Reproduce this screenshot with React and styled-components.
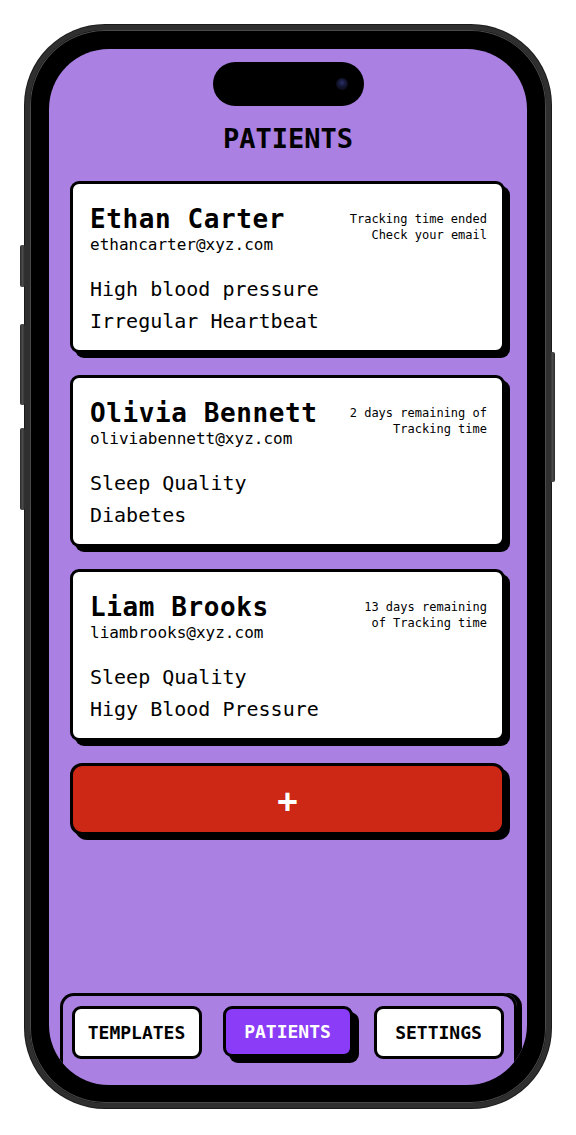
import React from 'react'
import styled, { createGlobalStyle } from 'styled-components'

const GlobalStyle = createGlobalStyle`
  html, body {
    margin: 0;
    padding: 0;
    background: #ffffff;
  }
  * { box-sizing: border-box; }
`

const patients = [
  {
    name: 'Ethan Carter',
    email: 'ethancarter@xyz.com',
    status: ['Tracking time ended', 'Check your email'],
    conditions: ['High blood pressure', 'Irregular Heartbeat'],
  },
  {
    name: 'Olivia Bennett',
    email: 'oliviabennett@xyz.com',
    status: ['2 days remaining of', 'Tracking time'],
    conditions: ['Sleep Quality', 'Diabetes'],
  },
  {
    name: 'Liam Brooks',
    email: 'liambrooks@xyz.com',
    status: ['13 days remaining', 'of Tracking time'],
    conditions: ['Sleep Quality', 'Higy Blood Pressure'],
  },
]

const tabs = ['TEMPLATES', 'PATIENTS', 'SETTINGS']

function App() {
  return (
    <Page>
      <GlobalStyle />
      <Phone>
        <SideButton side="left" top={215} height={42} />
        <SideButton side="left" top={294} height={81} />
        <SideButton side="left" top={398} height={82} />
        <SideButton side="right" top={322} height={130} />
        <Screen>
          <Island>
            <Camera />
          </Island>
          <Title>PATIENTS</Title>
          <List>
            {patients.map((p) => (
              <Card key={p.email}>
                <CardTop>
                  <div>
                    <Name>{p.name}</Name>
                    <Email>{p.email}</Email>
                  </div>
                  <Status>
                    {p.status.map((s) => (
                      <div key={s}>{s}</div>
                    ))}
                  </Status>
                </CardTop>
                <Conditions>
                  {p.conditions.map((c) => (
                    <div key={c}>{c}</div>
                  ))}
                </Conditions>
              </Card>
            ))}
            <AddButton>+</AddButton>
          </List>
          <NavBar>
            {tabs.map((t) => (
              <Tab key={t} active={t === 'PATIENTS'}>
                {t}
              </Tab>
            ))}
          </NavBar>
        </Screen>
      </Phone>
    </Page>
  )
}

const Page = styled.div`
  width: 576px;
  height: 1135px;
  padding: 25px 0 0 25px;
  font-family: "DejaVu Sans Mono", "Liberation Mono", monospace;
`

const Phone = styled.div`
  position: relative;
  width: 526px;
  height: 1083px;
  padding: 19px 19px 18px 19px;
  border: 5px solid #2f2f2f;
  border-radius: 80px;
  background: #000;
  box-shadow: inset 0 0 0 1px #4a4a4a, 0 0 0 1px #1a1a1a;
`

const SideButton = styled.div`
  position: absolute;
  top: ${(p) => p.top}px;
  ${(p) => (p.side === 'left' ? 'left: -10px;' : 'right: -9px;')}
  width: 5px;
  height: ${(p) => p.height}px;
  background: linear-gradient(90deg, #2a2a2a, #4a4a4a, #2a2a2a);
  border-radius: 2px;
`

const Screen = styled.div`
  position: relative;
  width: 478px;
  height: 1036px;
  border-radius: 60px;
  overflow: hidden;
  background: #aa80e2;
  display: flex;
  flex-direction: column;
  align-items: center;
`

const Island = styled.div`
  margin-top: 13px;
  width: 151px;
  height: 44px;
  border-radius: 22px;
  background: #000;
  display: flex;
  align-items: center;
  justify-content: flex-end;
  padding-right: 16px;
`

const Camera = styled.div`
  width: 12px;
  height: 12px;
  border-radius: 50%;
  background: radial-gradient(circle at 50% 40%, #2a2f6a 0, #12142e 45%, #050508 100%);
`

const Title = styled.h1`
  margin: 17px 0 0;
  font-size: 27px;
  line-height: 32px;
  font-weight: 700;
  color: #000;
`

const List = styled.div`
  margin-top: 26px;
  width: 100%;
  padding: 0 22px 0 21px;
  display: flex;
  flex-direction: column;
  gap: 22px;
`

const Card = styled.div`
  height: 172px;
  background: #fff;
  border: 3px solid #000;
  border-radius: 9px;
  box-shadow: 5px 5px 0 #000;
  padding: 20px 15px 14px 17px;
  color: #000;
`

const CardTop = styled.div`
  display: flex;
  justify-content: space-between;
  align-items: flex-start;
`

const Name = styled.div`
  font-size: 26px;
  line-height: 30px;
  font-weight: 700;
  letter-spacing: 0.6px;
`

const Email = styled.div`
  margin-top: 1px;
  font-size: 16px;
  line-height: 20px;
`

const Status = styled.div`
  padding-top: 7px;
  font-size: 12px;
  line-height: 16px;
  text-align: right;
`

const Conditions = styled.div`
  margin-top: 18px;
  font-size: 20px;
  line-height: 32px;
`

const AddButton = styled.button`
  height: 72px;
  background: #cc2815;
  border: 3px solid #000;
  border-radius: 12px;
  box-shadow: 5px 5px 0 #000;
  color: #fff;
  font-family: inherit;
  font-size: 34px;
  font-weight: 700;
  line-height: 1;
  padding: 4px 0 0;
`

const NavBar = styled.div`
  margin-top: auto;
  width: 457px;
  height: 92px;
  border: 3px solid #000;
  border-bottom: none;
  border-radius: 14px 14px 0 0;
  box-shadow: 5px 0 0 #000;
  padding: 10px 10px 0 9px;
  display: flex;
  justify-content: space-between;
  align-items: flex-start;
`

const Tab = styled.div`
  width: 130px;
  height: ${(p) => (p.active ? 51 : 53)}px;
  border: 3px solid #000;
  border-radius: 9px;
  background: ${(p) => (p.active ? '#8a3cf6' : '#fff')};
  color: ${(p) => (p.active ? '#fff' : '#000')};
  box-shadow: ${(p) => (p.active ? '6px 6px 0 #000' : 'none')};
  display: flex;
  align-items: center;
  justify-content: center;
  font-size: 18px;
  font-weight: 700;
`

export default App
